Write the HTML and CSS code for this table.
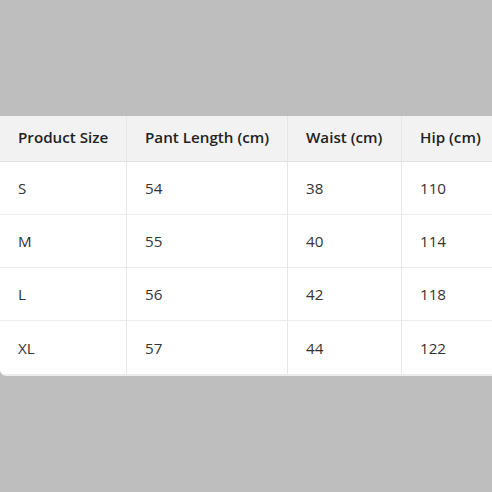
FILE: index.html
```html
<!DOCTYPE html>
<html>
<head>
<meta charset="utf-8">
<link rel="stylesheet" href="styles.css">
</head>
<body>
<div class="wrap">
  <table class="sizes">
    <thead>
      <tr><th class="c1">Product Size</th><th class="c2">Pant Length (cm)</th><th class="c3">Waist (cm)</th><th class="c4">Hip (cm)</th></tr>
    </thead>
    <tbody>
      <tr><td>S</td><td>54</td><td>38</td><td>110</td></tr>
      <tr><td>M</td><td>55</td><td>40</td><td>114</td></tr>
      <tr><td>L</td><td>56</td><td>42</td><td>118</td></tr>
      <tr><td>XL</td><td>57</td><td>44</td><td>122</td></tr>
    </tbody>
  </table>
</div>
</body>
</html>
```
FILE: styles.css
```css
html, body {
  margin: 0;
  padding: 0;
  background: #bebebe;
  width: 492px;
  height: 492px;
  overflow: hidden;
}
.wrap {
  padding-top: 116px;
  width: 492px;
  overflow: hidden;
}
.sizes {
  border-collapse: separate;
  border-spacing: 0;
  table-layout: fixed;
  width: 532px;
  background: #fff;
  font-family: "Open Sans", "Noto Sans", sans-serif;
  font-size: 15.2px;
  color: #333;
  border-bottom: 2px solid #ececec;
  border-bottom-left-radius: 6px;
}
.sizes th, .sizes td {
  box-sizing: border-box;
  text-align: left;
  padding: 0 18px;
  border-right: 1px solid #e6e6e6;
  border-bottom: 1px solid #ececec;
  white-space: nowrap;
}
.sizes th {
  height: 46px;
  padding-bottom: 4px;
  background: #f2f2f2;
  font-weight: 600;
  color: #222;
  border-bottom-color: #e0e0e0;
}
.sizes td {
  height: 53px;
}
.sizes tbody tr:last-child td {
  border-bottom: none;
}
.c1 { width: 127px; }
.c2 { width: 161px; }
.c3 { width: 114px; }
.c4 { width: 130px; }
```
